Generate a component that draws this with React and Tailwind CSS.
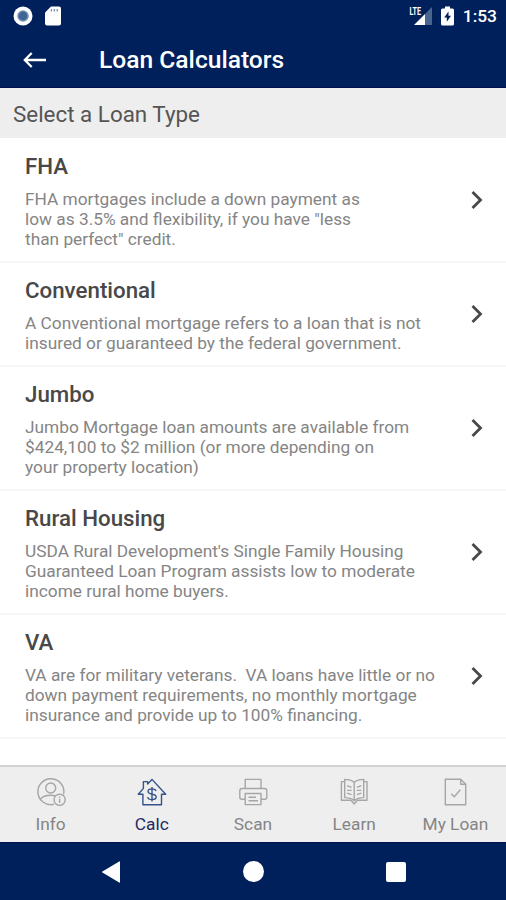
import React, { useState } from "react";

const loanTypes = [
  {
    name: "FHA",
    lines: [
      "FHA mortgages include a down payment as",
      'low as 3.5% and flexibility, if you have "less',
      'than perfect" credit.',
    ],
  },
  {
    name: "Conventional",
    lines: [
      "A Conventional mortgage refers to a loan that is not",
      "insured or guaranteed by the federal government.",
    ],
  },
  {
    name: "Jumbo",
    lines: [
      "Jumbo Mortgage loan amounts are available from",
      "$424,100 to $2 million (or more depending on",
      "your property location)",
    ],
  },
  {
    name: "Rural Housing",
    lines: [
      "USDA Rural Development's Single Family Housing",
      "Guaranteed Loan Program assists low to moderate",
      "income rural home buyers.",
    ],
  },
  {
    name: "VA",
    lines: [
      "VA are for military veterans.  VA loans have little or no",
      "down payment requirements, no monthly mortgage",
      "insurance and provide up to 100% financing.",
    ],
  },
];

const TabIcon = ({ children }) => (
  <svg
    className="w-8 h-8"
    viewBox="0 0 32 32"
    fill="none"
    stroke="currentColor"
    strokeWidth="1.4"
    strokeLinejoin="round"
  >
    {children}
  </svg>
);

const InfoIcon = () => (
  <TabIcon>
    <path d="M19 28.3A13 13 0 1 1 28.6 18.3" />
    <circle cx="15.7" cy="12" r="5" />
    <path d="M5.2 23.2C7.5 20.4 11.5 19.2 15.7 19.2c1.8 0 3.6.3 5 .9" />
    <circle cx="24.6" cy="23.8" r="5.6" />
    <path d="M24.6 22.8v4.2M24.6 20.4v1.3" />
  </TabIcon>
);

const CalcIcon = () => (
  <TabIcon>
    <path d="M6.9 18.3v10.4h18.6V18.3h4.2L16 3.4l-4.4 4.5V5.6H7.4v6.8l-5.1 5.9z" />
    <path d="M20 15c-.4-1.4-2-2.1-4-2.1-2.3 0-4 .9-4 2.7 0 3.7 8.2 1.6 8.2 5.2 0 1.8-1.7 2.8-4.2 2.8-2.3 0-4-.9-4.3-2.6M16 11v14.4" />
  </TabIcon>
);

const ScanIcon = () => (
  <TabIcon>
    <path d="M8.2 12.5V3.4H24v9.1" />
    <path d="M8.2 23.3H4.8a2 2 0 0 1-2-2v-6.6A2.2 2.2 0 0 1 5 12.5h22.6a2.2 2.2 0 0 1 2.2 2.2v6.6a2 2 0 0 1-2 2H24" />
    <path d="M8.2 17.5H24v11.1H8.2z" />
    <path d="M11.5 21.2H19M11.5 24.8H21" />
  </TabIcon>
);

const LearnIcon = () => (
  <TabIcon>
    <path d="M16.2 6.4c-2.4-2.1-5.7-3-9.5-3v18.2c3.8 0 7.1.9 9.5 3 2.4-2.1 5.7-3 9.5-3V3.4c-3.8 0-7.1.9-9.5 3zM16.2 6.4v18.2" />
    <path d="M6.7 5.6H3.4v18.6H13l3.2 3.8 3.2-3.8H29V5.6h-3.3" />
    <path d="M9.1 9.6l4.4 1.8M9.1 14.4h4.6M9.1 17.2l4.4 1.4M23.3 9.6l-4.4 1.8M23.3 14.4h-4.6M23.3 17.2l-4.4 1.4" />
  </TabIcon>
);

const MyLoanIcon = () => (
  <TabIcon>
    <path d="M6.3 3.3h15.4l5 5v20.4H6.3z" />
    <path d="M21.7 3.3v5h5M12.3 17.8l3 2.9 6-7" />
  </TabIcon>
);

const tabs = [
  { name: "Info", Icon: InfoIcon },
  { name: "Calc", Icon: CalcIcon },
  { name: "Scan", Icon: ScanIcon },
  { name: "Learn", Icon: LearnIcon },
  { name: "My Loan", Icon: MyLoanIcon },
];

const StatusBar = () => (
  <div className="h-8 flex items-center justify-between pl-[13px] pr-[9px] text-white">
    <div className="flex items-center gap-[12px]">
      <svg className="w-[20px] h-[20px]" viewBox="0 0 20 20">
        <circle cx="10" cy="10" r="9.5" fill="#fff" />
        <circle cx="10" cy="10" r="5.8" fill="#7c98bd" />
        <circle cx="10" cy="10" r="4.4" fill="#3f6595" />
      </svg>
      <svg className="w-[16px] h-[20px]" viewBox="0 0 16 20">
        <path d="M6 0.5h8a2 2 0 0 1 2 2v15a2 2 0 0 1-2 2H2a2 2 0 0 1-2-2V6.5z" fill="#fff" />
        <path d="M6.4 3v2.6M9.3 3v2.6M12.2 3v2.6" stroke="#7d8db0" strokeWidth="1.3" />
      </svg>
    </div>
    <div className="flex items-center">
      <svg className="w-[24px] h-[20px]" viewBox="0 0 24 20">
        <path d="M23 1v18h-7V8z" fill="#48648f" />
        <path d="M16 8v11H5z" fill="#fff" />
        <text
          x="0.5"
          y="8.6"
          fontSize="11"
          fontWeight="700"
          fill="#fff"
          textLength="11.5"
          lengthAdjust="spacingAndGlyphs"
        >
          LTE
        </text>
      </svg>
      <svg className="w-[13px] h-[20px] ml-[8px]" viewBox="0 0 13 20">
        <path d="M4 .5h5v2h2.5A1.5 1.5 0 0 1 13 4v14a1.5 1.5 0 0 1-1.5 1.5h-10A1.5 1.5 0 0 1 0 18V4a1.5 1.5 0 0 1 1.5-1.5H4z" fill="#fff" />
        <path d="M7.5 5.5L3.2 11.6h2.6v4.2L10 9.8H7.5z" fill="#00205b" />
      </svg>
      <span className="ml-[9px] text-[17.4px] leading-5 font-medium">1:53</span>
    </div>
  </div>
);

const App = () => {
  const [activeTab, setActiveTab] = useState("Calc");

  return (
    <div className="w-full h-screen flex flex-col overflow-hidden bg-white font-['Roboto',sans-serif]">
      <header className="h-[88px] shrink-0 bg-[#00205b] border-b border-[#00104c]">
        <StatusBar />
        <div className="h-14 flex items-center">
          <button className="ml-[23px] text-white" aria-label="Back">
            <svg
              className="w-6 h-4"
              viewBox="0 0 24 16"
              fill="none"
              stroke="currentColor"
              strokeWidth="2.3"
            >
              <path d="M23 8H2M8.7 1L1.8 8l6.9 7" />
            </svg>
          </button>
          <h1 className="ml-[52px] pt-px text-[24.6px] font-medium text-white whitespace-nowrap">
            Loan Calculators
          </h1>
        </div>
      </header>

      <div className="h-[50px] shrink-0 flex items-center pl-[13px] pt-[3px] bg-[#eeeeee] text-[22.4px] text-[#555555] whitespace-nowrap">
        Select a Loan Type
      </div>

      <main className="flex-1 min-h-0 pt-px">
        {loanTypes.map((loan) => (
          <div
            key={loan.name}
            className="flex items-center pl-[25px] pr-[22px] pt-[12px] pb-[12px] border-b-2 border-[#f5f5f5]"
          >
            <div className="flex-1">
              <h2 className="text-[22.3px] leading-[30px] font-medium text-[#484848]">
                {loan.name}
              </h2>
              <p className="mt-[8px] text-[17.3px] leading-[20px] text-[#858585]">
                {loan.lines.map((line) => (
                  <span key={line} className="block whitespace-pre">
                    {line}
                  </span>
                ))}
              </p>
            </div>
            <svg
              className="w-[14px] h-5 shrink-0"
              viewBox="0 0 14 20"
              fill="none"
              stroke="#484848"
              strokeWidth="2.8"
            >
              <path d="M2.5 2l8 8-8 8" />
            </svg>
          </div>
        ))}
      </main>

      <nav className="h-[77px] shrink-0 grid grid-cols-5 bg-[#eeeeee] border-t-2 border-[#d2d2d2]">
        {tabs.map(({ name, Icon }) => (
          <button
            key={name}
            onClick={() => setActiveTab(name)}
            className={`flex flex-col items-center pt-[9px] ${
              activeTab === name ? "text-[#34538a]" : "text-[#a6a6a6]"
            }`}
          >
            <Icon />
            <span
              className={`mt-[6px] text-[17.3px] leading-5 whitespace-nowrap ${
                activeTab === name ? "text-[#1f2a63]" : "text-[#858585]"
              }`}
            >
              {name}
            </span>
          </button>
        ))}
      </nav>

      {/* Android navigation buttons */}
      <div className="h-[58px] shrink-0 flex items-center bg-[#00205b] border-t border-[#00104c] text-white">
        <svg className="w-[20px] h-[22px] ml-[101px]" viewBox="0 0 20 22" fill="currentColor">
          <path d="M19 .8v20.4q0 .8-.8.3L1.4 11.6q-.8-.6 0-1.1L18.2.5q.8-.5.8.3z" />
        </svg>
        <div className="w-[21px] h-[21px] ml-[122px] rounded-full bg-white" />
        <div className="w-[20px] h-[20px] ml-[122px] rounded-[2px] bg-white" />
      </div>
    </div>
  );
};

export default App;
